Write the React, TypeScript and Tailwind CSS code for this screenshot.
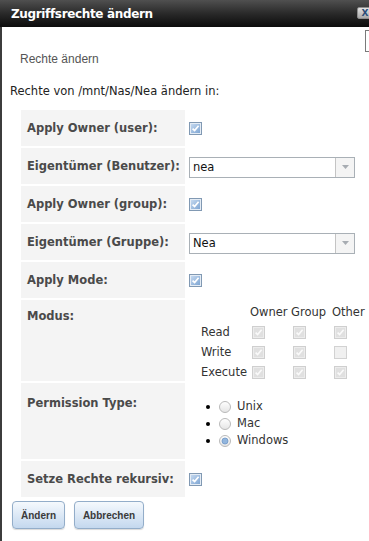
import React from 'react';

type BoxState = 'on' | 'dis' | 'off';

function CheckBox({ state = 'on' }: { state?: BoxState }) {
  if (state === 'on') {
    return (
      <svg width="13" height="13" viewBox="0 0 13 13" className="block shrink-0">
        <defs>
          <linearGradient id="cbOn" x1="0" y1="0" x2="1" y2="1">
            <stop offset="0" stopColor="#c4d8ef" />
            <stop offset="1" stopColor="#7fa6d3" />
          </linearGradient>
        </defs>
        <rect x="0.5" y="0.5" width="12" height="12" fill="#e4ecf5" stroke="#8199b3" />
        <rect x="2" y="2" width="9" height="9" fill="url(#cbOn)" />
        <path d="M3.6 6.6 L5.6 8.6 L9.6 3.8" fill="none" stroke="#ffffff" strokeWidth="1.7" />
      </svg>
    );
  }
  if (state === 'dis') {
    return (
      <svg width="13" height="13" viewBox="0 0 13 13" className="block shrink-0">
        <rect x="0.5" y="0.5" width="12" height="12" fill="#ececec" stroke="#cfcfcf" />
        <rect x="2" y="2" width="9" height="9" fill="#e0e0e0" />
        <path d="M3.6 6.6 L5.6 8.6 L9.6 3.8" fill="none" stroke="#fafafa" strokeWidth="1.6" />
      </svg>
    );
  }
  return (
    <svg width="13" height="13" viewBox="0 0 13 13" className="block shrink-0">
      <rect x="0.5" y="0.5" width="12" height="12" fill="#f0f0f0" stroke="#d2d2d2" />
    </svg>
  );
}

function Radio({ checked = false }: { checked?: boolean }) {
  return (
    <svg width="12" height="12" viewBox="0 0 12 12" className="block shrink-0">
      <defs>
        <linearGradient id="rdBg" x1="0" y1="0" x2="0" y2="1">
          <stop offset="0" stopColor="#ffffff" />
          <stop offset="1" stopColor="#e4e4e4" />
        </linearGradient>
      </defs>
      <circle cx="6" cy="6" r="5.5" fill="url(#rdBg)" stroke="#b9b9b9" />
      {checked && <circle cx="6" cy="6" r="3" fill="#93b6dd" stroke="#6f97c6" strokeWidth="0.8" />}
    </svg>
  );
}

function Select({ value }: { value: string }) {
  return (
    <div className="flex h-[21px] w-[166px] border border-[#a9b0b6] bg-white">
      <div className="flex-1 pl-[3px] text-[11.5px] leading-[19px] text-[#111]">{value}</div>
      <div className="flex w-[19px] items-center justify-center border-l border-[#c4c4c4] bg-[#f4f4f4]">
        <svg width="7" height="4" viewBox="0 0 7 4">
          <path d="M0 0 H7 L3.5 4 Z" fill="#a7acb2" />
        </svg>
      </div>
    </div>
  );
}

function Row({
  label,
  h,
  children,
}: {
  label: string;
  h: string;
  children: React.ReactNode;
}) {
  return (
    <div className={`flex ${h}`}>
      <div className="flex w-[164px] shrink-0 items-center bg-[#f4f4f4] pl-[6px] text-[11.5px] font-bold leading-[14px] text-[#4a4a4a]">
        {label}
      </div>
      <div className="flex flex-1 items-center pl-[4px]">{children}</div>
    </div>
  );
}

export default function App() {
  const perms: { name: string; boxes: BoxState[] }[] = [
    { name: 'Read', boxes: ['dis', 'dis', 'dis'] },
    { name: 'Write', boxes: ['dis', 'dis', 'off'] },
    { name: 'Execute', boxes: ['dis', 'dis', 'dis'] },
  ];
  const types = [
    { name: 'Unix', checked: false },
    { name: 'Mac', checked: false },
    { name: 'Windows', checked: true },
  ];

  return (
    <div className="flex h-[541px] w-[369px] flex-col overflow-hidden bg-white font-['DejaVu_Sans',Verdana,sans-serif]">
      <div className="flex h-[27px] shrink-0 items-center overflow-hidden bg-gradient-to-b from-[#505050] via-[#2a2a2a] to-[#0c0c0c] pl-[11px]">
        <span className="text-[12px] font-bold tracking-[-0.35px] text-white">Zugriffsrechte ändern</span>
        <div className="ml-auto mr-[-4px] mt-[-1px] flex h-[12px] w-[16px] items-center justify-center rounded-[2px] border border-[#8d8d8d] bg-gradient-to-b from-[#e2e2e2] to-[#a9a9a9] text-[9px] font-bold leading-none text-[#2b4d78]">
          X
        </div>
      </div>

      <div className="flex flex-1 flex-col border-l-2 border-[#3c3c3c] pl-[8px]">
        <div className="mt-[3px] flex h-[22px] justify-end">
          <div className="w-[4px] border border-r-0 border-[#7a7a7a]" />
        </div>
        <div className="pl-[10px] font-['Liberation_Sans',Arial,sans-serif] text-[12px] leading-[14px] text-[#555]">
          Rechte ändern
        </div>
        <div className="mt-[18px] text-[11.5px] leading-[14px] text-[#222]">
          Rechte von /mnt/Nas/Nea ändern in:
        </div>

        <div className="ml-[11px] mt-[12px] flex flex-col gap-[2px]">
          <Row label="Apply Owner (user):" h="h-[36px]">
            <CheckBox />
          </Row>
          <Row label="Eigentümer (Benutzer):" h="h-[36px]">
            <div className="mt-[2px]">
              <Select value="nea" />
            </div>
          </Row>
          <Row label="Apply Owner (group):" h="h-[36px]">
            <CheckBox />
          </Row>
          <Row label="Eigentümer (Gruppe):" h="h-[36px]">
            <div className="mt-[2px]">
              <Select value="Nea" />
            </div>
          </Row>
          <Row label="Apply Mode:" h="h-[36px]">
            <CheckBox />
          </Row>
          <div className="flex h-[81px]">
            <div className="w-[164px] shrink-0 bg-[#f4f4f4] pl-[6px] pt-[9px] text-[11.5px] font-bold leading-[14px] text-[#4a4a4a]">
              Modus:
            </div>
            <div className="grid grid-cols-[49px_41px_41px_auto] content-start pl-[16px] pt-[2px] text-[11.5px] leading-[20px] text-[#333]">
              <div />
              <div>Owner</div>
              <div>Group</div>
              <div>Other</div>
              {perms.map((p) => (
                <React.Fragment key={p.name}>
                  <div>{p.name}</div>
                  {p.boxes.map((b, i) => (
                    <div key={i} className="flex h-[20px] items-center pl-[2px] pt-[1px]">
                      <CheckBox state={b} />
                    </div>
                  ))}
                </React.Fragment>
              ))}
            </div>
          </div>
          <div className="flex h-[76px]">
            <div className="w-[164px] shrink-0 bg-[#f4f4f4] pl-[6px] pt-[13px] text-[11.5px] font-bold leading-[14px] text-[#4a4a4a]">
              Permission Type:
            </div>
            <ul className="flex flex-col pt-[15px] text-[11.5px] text-[#333]">
              {types.map((t) => (
                <li key={t.name} className="flex h-[17px] items-center">
                  <span className="ml-[21px] h-[4px] w-[4px] rounded-full bg-black" />
                  <span className="ml-[9px]">
                    <Radio checked={t.checked} />
                  </span>
                  <span className="ml-[6px]">{t.name}</span>
                </li>
              ))}
            </ul>
          </div>
          <Row label="Setze Rechte rekursiv:" h="h-[36px]">
            <CheckBox />
          </Row>
        </div>

        <div className="ml-[2px] mt-[4px] flex gap-[9px]">
          <button className="h-[28px] w-[53px] rounded-[4px] border border-[#93adc9] bg-gradient-to-b from-[#f5f9fd] to-[#c4d8ee] font-['Liberation_Sans',Arial,sans-serif] text-[10px] font-bold text-[#3a3a3a] shadow-[0_1px_1px_rgba(0,0,0,0.15)]">
            Ändern
          </button>
          <button className="h-[28px] w-[70px] rounded-[4px] border border-[#93adc9] bg-gradient-to-b from-[#f5f9fd] to-[#c4d8ee] font-['Liberation_Sans',Arial,sans-serif] text-[10px] font-bold text-[#3a3a3a] shadow-[0_1px_1px_rgba(0,0,0,0.15)]">
            Abbrechen
          </button>
        </div>
      </div>
    </div>
  );
}
